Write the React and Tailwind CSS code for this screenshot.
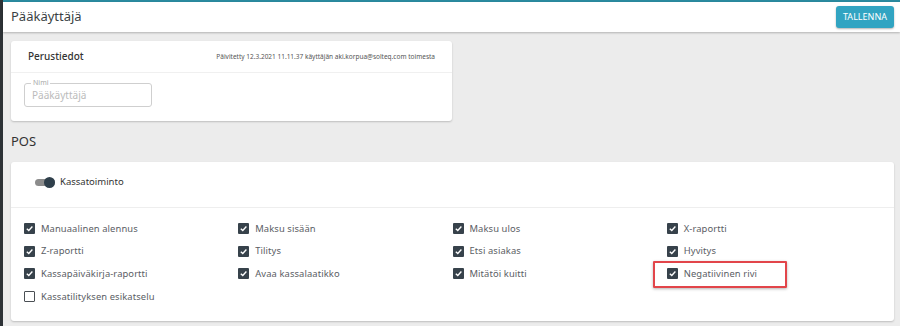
import React from "react";

const font = { fontFamily: '"Noto Sans", "Liberation Sans", sans-serif' };

function Check({ checked }) {
  return checked ? (
    <span className="w-[11px] h-[11px] rounded-[1px] bg-[#37424b] flex items-center justify-center shrink-0">
      <svg width="9" height="9" viewBox="0 0 10 10">
        <path d="M2 5.2 L4.2 7.2 L8.2 2.8" fill="none" stroke="white" strokeWidth="1.5" />
      </svg>
    </span>
  ) : (
    <span className="w-[11px] h-[11px] rounded-[1px] border border-[#4a4f54] bg-white shrink-0" />
  );
}

function Item({ label, checked = true, highlight = false }) {
  return (
    <div className="relative h-[22.7px] flex items-center gap-[6px]">
      {highlight && (
        <div className="absolute left-[-14px] top-[-1px] w-[134px] h-[27px] border-2 border-[#e2454a] rounded-[1px] shadow-[0_1px_3px_rgba(0,0,0,0.3)]" />
      )}
      <Check checked={checked} />
      <span className="text-[9.4px] text-[#5a5d64] leading-none tracking-[0.1px]">{label}</span>
    </div>
  );
}

export default function App() {
  const cols = [
    [["Manuaalinen alennus"], ["Z-raportti"], ["Kassapäiväkirja-raportti"], ["Kassatilityksen esikatselu", false]],
    [["Maksu sisään"], ["Tilitys"], ["Avaa kassalaatikko"]],
    [["Maksu ulos"], ["Etsi asiakas"], ["Mitätöi kuitti"]],
    [["X-raportti"], ["Hyvitys"], ["Negatiivinen rivi", true, true]],
  ];
  return (
    <div className="w-[900px] h-[326px] bg-[#ececec] flex overflow-hidden" style={font}>
      <div className="w-[3px] bg-[#2d3236] shrink-0" />
      <div className="flex-1 flex flex-col">
        <div className="h-[2px] bg-[#2a8a9f]" />
        <div className="h-[30px] bg-white flex items-center justify-between pl-[8px] pr-[6px] shadow-[0_1px_2px_rgba(0,0,0,0.25)] relative z-10">
          <span className="text-[13px] text-[#3a3f44]">Pääkäyttäjä</span>
          <button className="h-[22px] w-[58px] rounded-[3px] bg-[#31a4c2] text-white text-[9px] shadow-[0_1px_2px_rgba(0,0,0,0.3)]">
            TALLENNA
          </button>
        </div>
        <div className="px-[8px] pr-[6px] pt-[9px]">
          <div className="w-[441px] h-[80px] bg-white rounded-[3px] shadow-[0_1px_2px_rgba(0,0,0,0.2)]">
            <div className="h-[32px] flex items-center justify-between px-[17px] border-b border-[#f0f0f0]">
              <span className="text-[10px] font-medium text-[#333]">Perustiedot</span>
              <span className="text-[6.5px] text-[#555]">
                Päivitetty 12.3.2021 11.11.37 käyttäjän aki.korpua@solteq.com toimesta
              </span>
            </div>
            <div className="pl-[13px] pt-[10px]">
              <div className="relative w-[128px] h-[24px] border border-[#cfcfcf] rounded-[3px] flex items-center px-[7px]">
                <span className="absolute left-[6px] top-[-5px] bg-white px-[2px] text-[7px] leading-none text-[#aaa]">Nimi</span>
                <span className="text-[10px] text-[#bbb]">Pääkäyttäjä</span>
              </div>
            </div>
          </div>
          <div className="h-[41px] flex items-center text-[13px] text-[#333]">POS</div>
          <div className="h-[159px] bg-white rounded-[3px] shadow-[0_1px_2px_rgba(0,0,0,0.2)]">
            <div className="h-[46px] flex items-center pl-[24px] pb-[4px] gap-[5px] border-b border-[#eeeeee]">
              <div className="relative w-[20px] h-[10px] flex items-center">
                <div className="w-[20px] h-[7px] rounded-full bg-[#8c8c8c]" />
                <div className="absolute right-0 w-[11px] h-[11px] rounded-full bg-[#2f3f4b]" />
              </div>
              <span className="text-[9.5px] text-[#333]">Kassatoiminto</span>
            </div>
            <div className="grid grid-cols-4 px-[13px] pt-[9px]">
              {cols.map((col, i) => (
                <div key={i} className="flex flex-col">
                  {col.map(([l, c = true, h = false]) => (
                    <Item key={l} label={l} checked={c} highlight={h} />
                  ))}
                </div>
              ))}
            </div>
          </div>
        </div>
      </div>
    </div>
  );
}
